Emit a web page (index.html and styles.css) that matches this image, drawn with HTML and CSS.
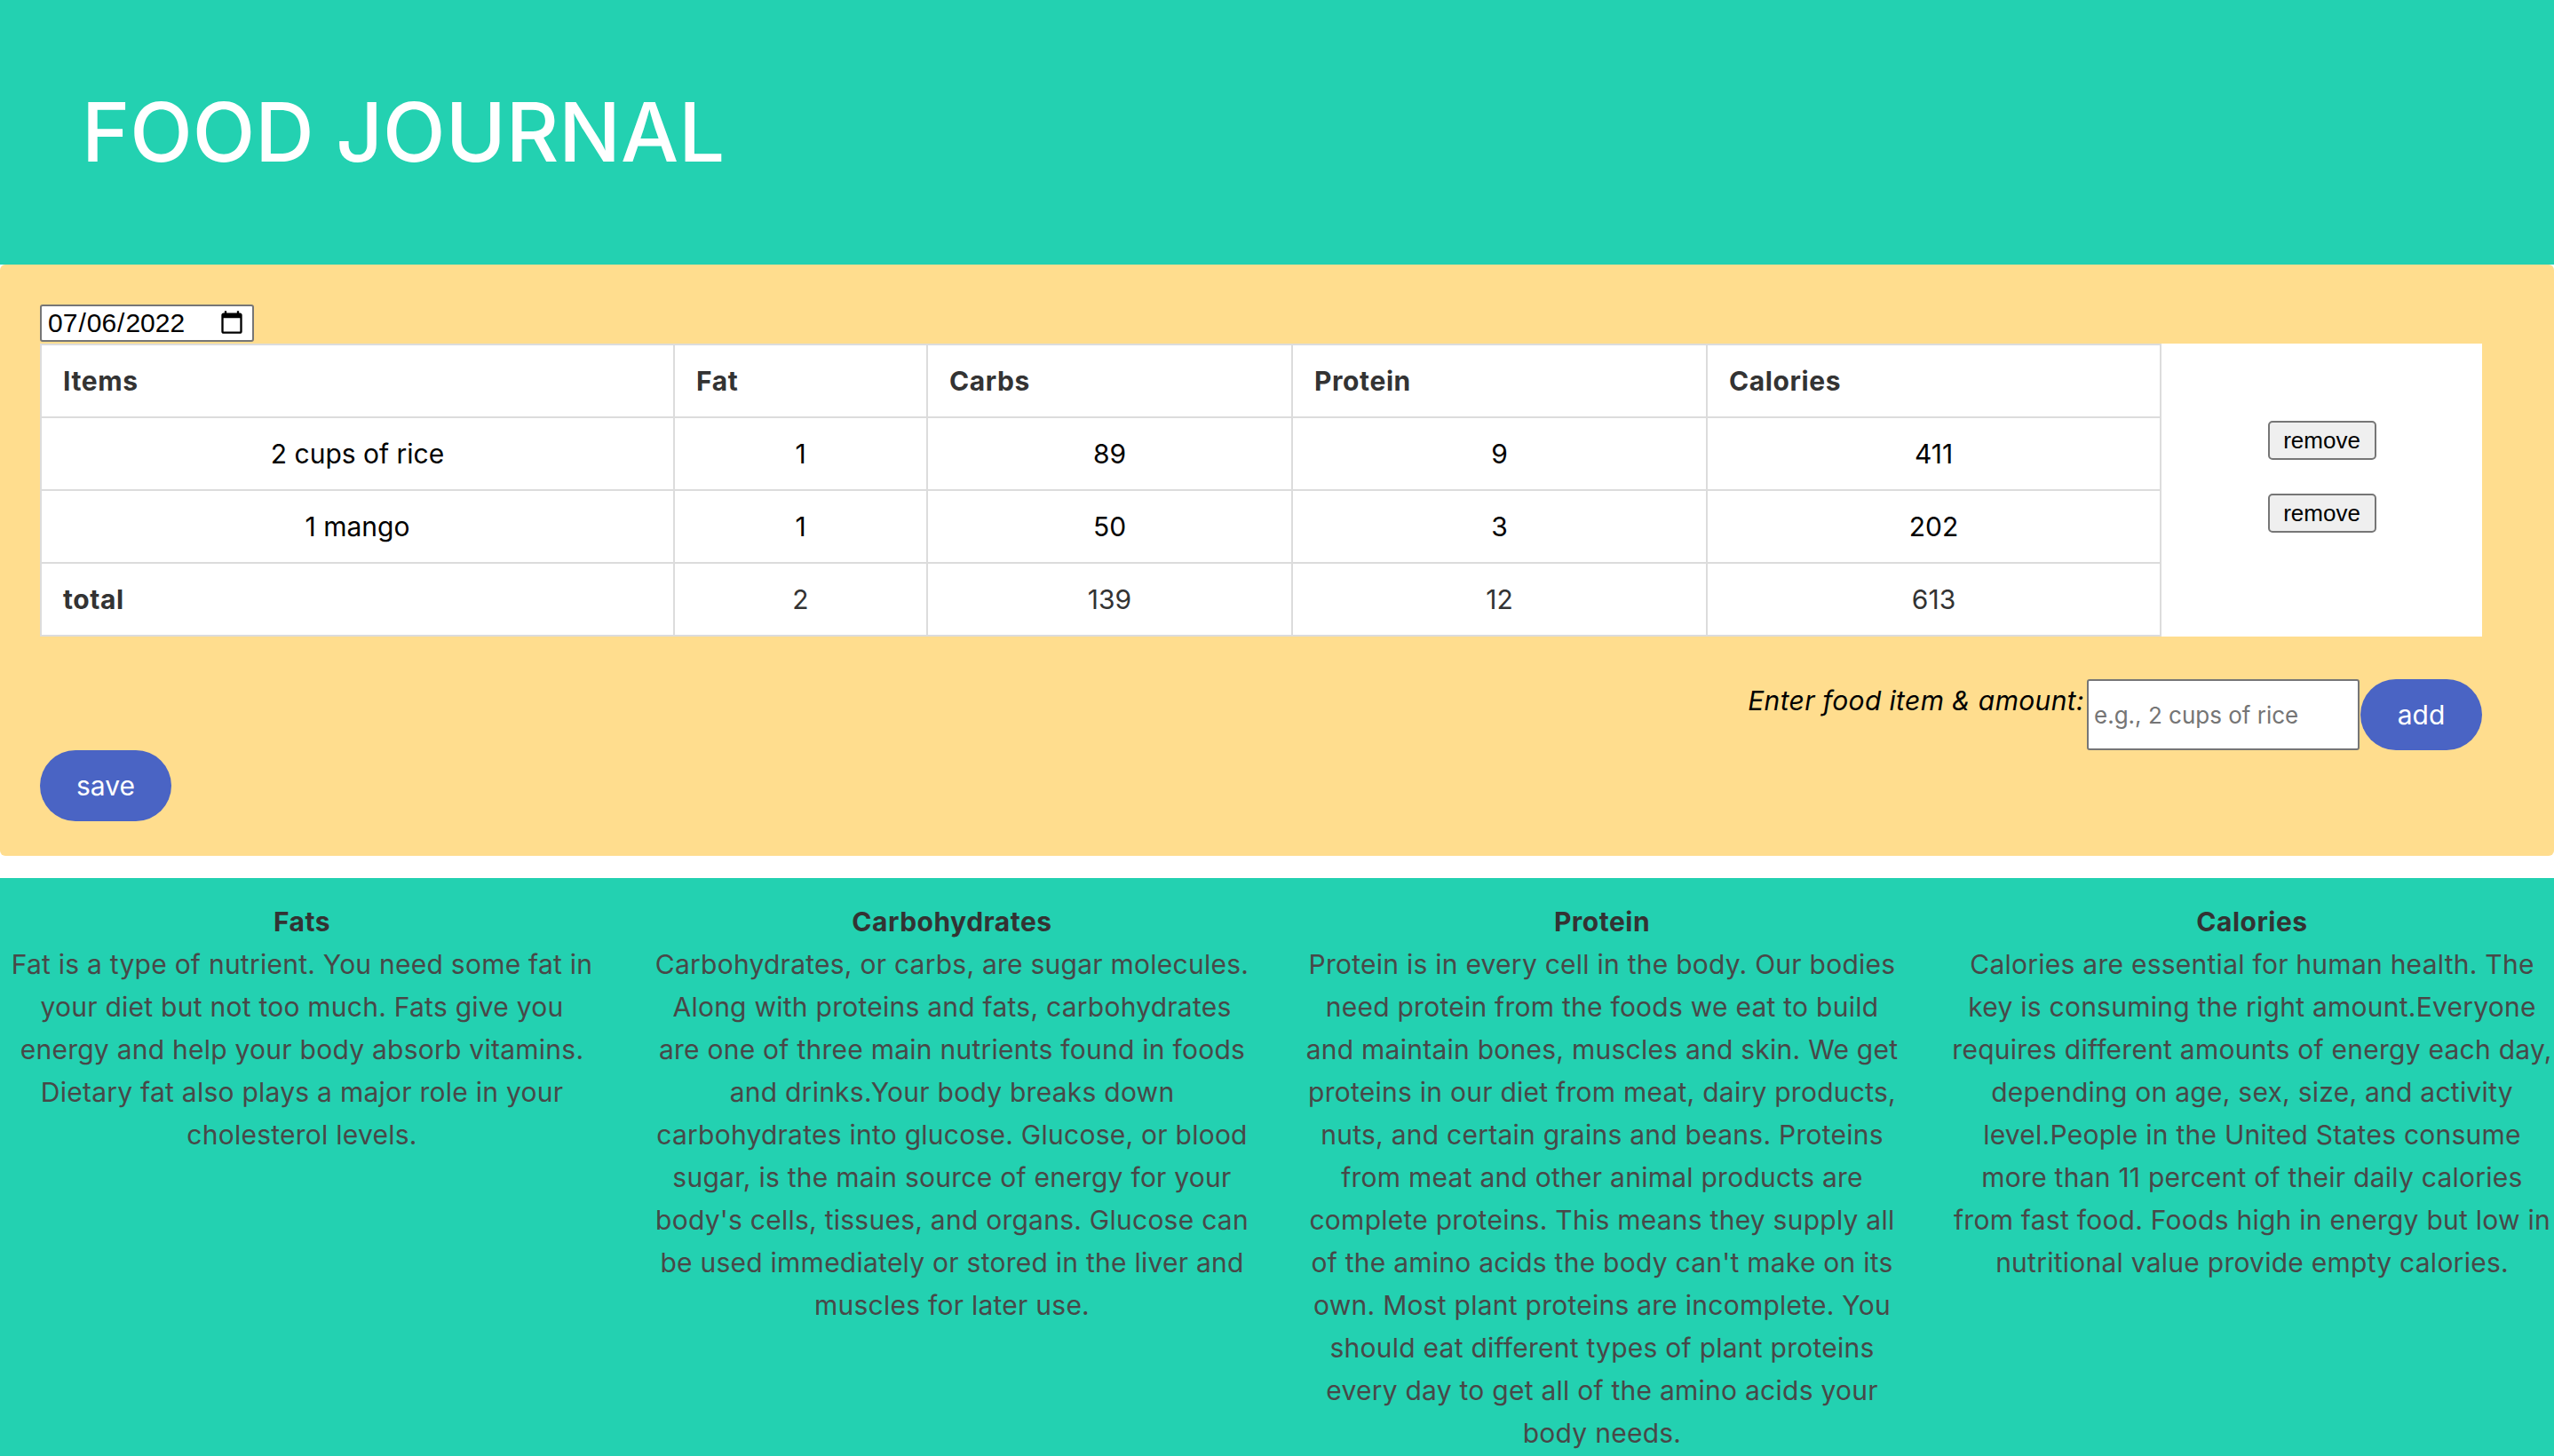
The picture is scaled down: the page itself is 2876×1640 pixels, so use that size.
FILE: index.html
```html
<!DOCTYPE html>
<html lang="en">
<head>
<meta charset="utf-8">
<title>Food Journal</title>
<link rel="stylesheet" href="styles.css">
</head>
<body>
<header class="masthead">
  <h1 class="title">FOOD JOURNAL</h1>
</header>
<main class="journal">
  <input type="date" class="date-input" value="2022-07-06">
  <div class="table-wrap">
    <table class="food-table">
      <colgroup>
        <col class="c-items"><col class="c-fat"><col class="c-carbs"><col class="c-protein"><col class="c-cal">
      </colgroup>
      <thead>
        <tr><th>Items</th><th>Fat</th><th>Carbs</th><th>Protein</th><th>Calories</th></tr>
      </thead>
      <tbody>
        <tr><td>2 cups of rice</td><td>1</td><td>89</td><td>9</td><td>411</td></tr>
        <tr><td>1 mango</td><td>1</td><td>50</td><td>3</td><td>202</td></tr>
        <tr class="total-row"><td class="total-label">total</td><td>2</td><td>139</td><td>12</td><td>613</td></tr>
      </tbody>
    </table>
    <div class="remove-col">
      <button class="remove-btn">remove</button>
      <button class="remove-btn">remove</button>
    </div>
  </div>
  <div class="add-row">
    <label class="add-label" for="food">Enter food item &amp; amount:</label>
    <input id="food" class="food-input" type="text" placeholder="e.g., 2 cups of rice">
    <button class="pill-btn add-btn">add</button>
  </div>
  <button class="pill-btn save-btn">save</button>
</main>
<section class="info">
  <article class="info-card">
    <h3 class="info-title">Fats</h3>
    <p class="info-text">Fat is a type of nutrient. You need some fat in your diet but not too much. Fats give you energy and help your body absorb vitamins. Dietary fat also plays a major role in your cholesterol levels.</p>
  </article>
  <article class="info-card">
    <h3 class="info-title">Carbohydrates</h3>
    <p class="info-text">Carbohydrates, or carbs, are sugar molecules. Along with proteins and fats, carbohydrates are one of three main nutrients found in foods and drinks.Your body breaks down carbohydrates into glucose. Glucose, or blood sugar, is the main source of energy for your body's cells, tissues, and organs. Glucose can be used immediately or stored in the liver and muscles for later use.</p>
  </article>
  <article class="info-card">
    <h3 class="info-title">Protein</h3>
    <p class="info-text">Protein is in every cell in the body. Our bodies need protein from the foods we eat to build and maintain bones, muscles and skin. We get proteins in our diet from meat, dairy products, nuts, and certain grains and beans. Proteins from meat and other animal products are complete proteins. This means they supply all of the amino acids the body can't make on its own. Most plant proteins are incomplete. You should eat different types of plant proteins every day to get all of the amino acids your body needs.</p>
  </article>
  <article class="info-card">
    <h3 class="info-title">Calories</h3>
    <p class="info-text">Calories are essential for human health. The key is consuming the right amount.Everyone requires different amounts of energy each day, depending on age, sex, size, and activity level.People in the United States consume more than 11 percent of their daily calories from fast food. Foods high in energy but low in nutritional value provide empty calories.</p>
  </article>
</section>
</body>
</html>
```

FILE: styles.css
```css
* { box-sizing: border-box; }

html, body {
  margin: 0;
  padding: 0;
  background: #ffffff;
  font-family: Inter, "Noto Sans", "Liberation Sans", sans-serif;
}

.masthead {
  background: #23d1b1;
  height: 298px;
  display: flex;
  align-items: center;
  padding-left: 92px;
}

.title {
  margin: 0;
  color: #ffffff;
  font-size: 92px;
  font-weight: 500;
  line-height: 1;
}

.journal {
  background: #ffdd8e;
  border-radius: 6px;
  padding: 45px 81px 39px 45px;
}

.date-input {
  display: block;
  width: 241px;
  height: 42px;
  margin: 0;
  padding: 0 6px;
  border: 2px solid #767676;
  border-radius: 3px;
  background: #ffffff;
  color: #000000;
  font-family: "Liberation Sans", Arial, sans-serif;
  font-size: 30px;
}

.table-wrap {
  display: flex;
  margin-top: 2px;
}

.food-table {
  border-collapse: collapse;
  background: #ffffff;
  width: 2387px;
  table-layout: fixed;
  font-size: 30px;
}

.c-items { width: 713px; }
.c-fat { width: 285px; }
.c-carbs { width: 411px; }
.c-protein { width: 467px; }
.c-cal { width: 511px; }

.food-table th,
.food-table td {
  border: 2px solid #dcdcdc;
  height: 82px;
  padding: 0 24px;
  line-height: 36px;
}

.food-table th {
  text-align: left;
  font-weight: 700;
  letter-spacing: 0.6px;
  color: #333333;
}

.food-table td {
  text-align: center;
  color: #000000;
  font-weight: 400;
}

.total-row td {
  color: #333333;
}

.food-table td.total-label {
  text-align: left;
  font-weight: 700;
  letter-spacing: 0.6px;
}

.remove-col {
  width: 363px;
  background: #ffffff;
  display: flex;
  flex-direction: column;
  align-items: center;
  padding-top: 87px;
  gap: 38px;
}

.remove-btn {
  width: 122px;
  height: 44px;
  margin: 0;
  padding: 0;
  background: #efefef;
  border: 2px solid #767676;
  border-radius: 5px;
  color: #000000;
  font-family: "Liberation Sans", Arial, sans-serif;
  font-size: 26px;
}

.add-row {
  display: flex;
  justify-content: flex-end;
  align-items: flex-start;
  margin-top: 48px;
}

.add-label {
  font-style: italic;
  font-size: 30px;
  letter-spacing: 0.35px;
  color: #000000;
  margin-top: 6px;
  margin-right: 3px;
}

.food-input {
  width: 307px;
  height: 80px;
  margin: 0;
  padding: 0 6px;
  border: 2px solid #767676;
  border-radius: 3px;
  background: #ffffff;
  font-family: Inter, "Liberation Sans", sans-serif;
  font-size: 26px;
  color: #000000;
}

.food-input::placeholder {
  color: #757575;
}

.pill-btn {
  height: 80px;
  margin: 0;
  padding: 0;
  border: none;
  border-radius: 40px;
  background: #4a64c4;
  color: #ffffff;
  font-family: Inter, "Liberation Sans", sans-serif;
  font-size: 30px;
}

.add-btn {
  width: 137px;
  margin-left: 1px;
}

.save-btn {
  display: block;
  width: 148px;
}

.info {
  margin-top: 25px;
  background: #23d1b1;
  padding: 25px 0 40px;
  display: grid;
  grid-template-columns: repeat(4, 1fr);
  column-gap: 52px;
}

.info-card {
  text-align: center;
}

.info-title {
  margin: 0;
  font-size: 30px;
  line-height: 48px;
  font-weight: 700;
  letter-spacing: 0.5px;
  color: #333333;
}

.info-text {
  margin: 0;
  font-size: 30px;
  line-height: 48px;
  letter-spacing: 0.25px;
  color: #484848;
}
```
